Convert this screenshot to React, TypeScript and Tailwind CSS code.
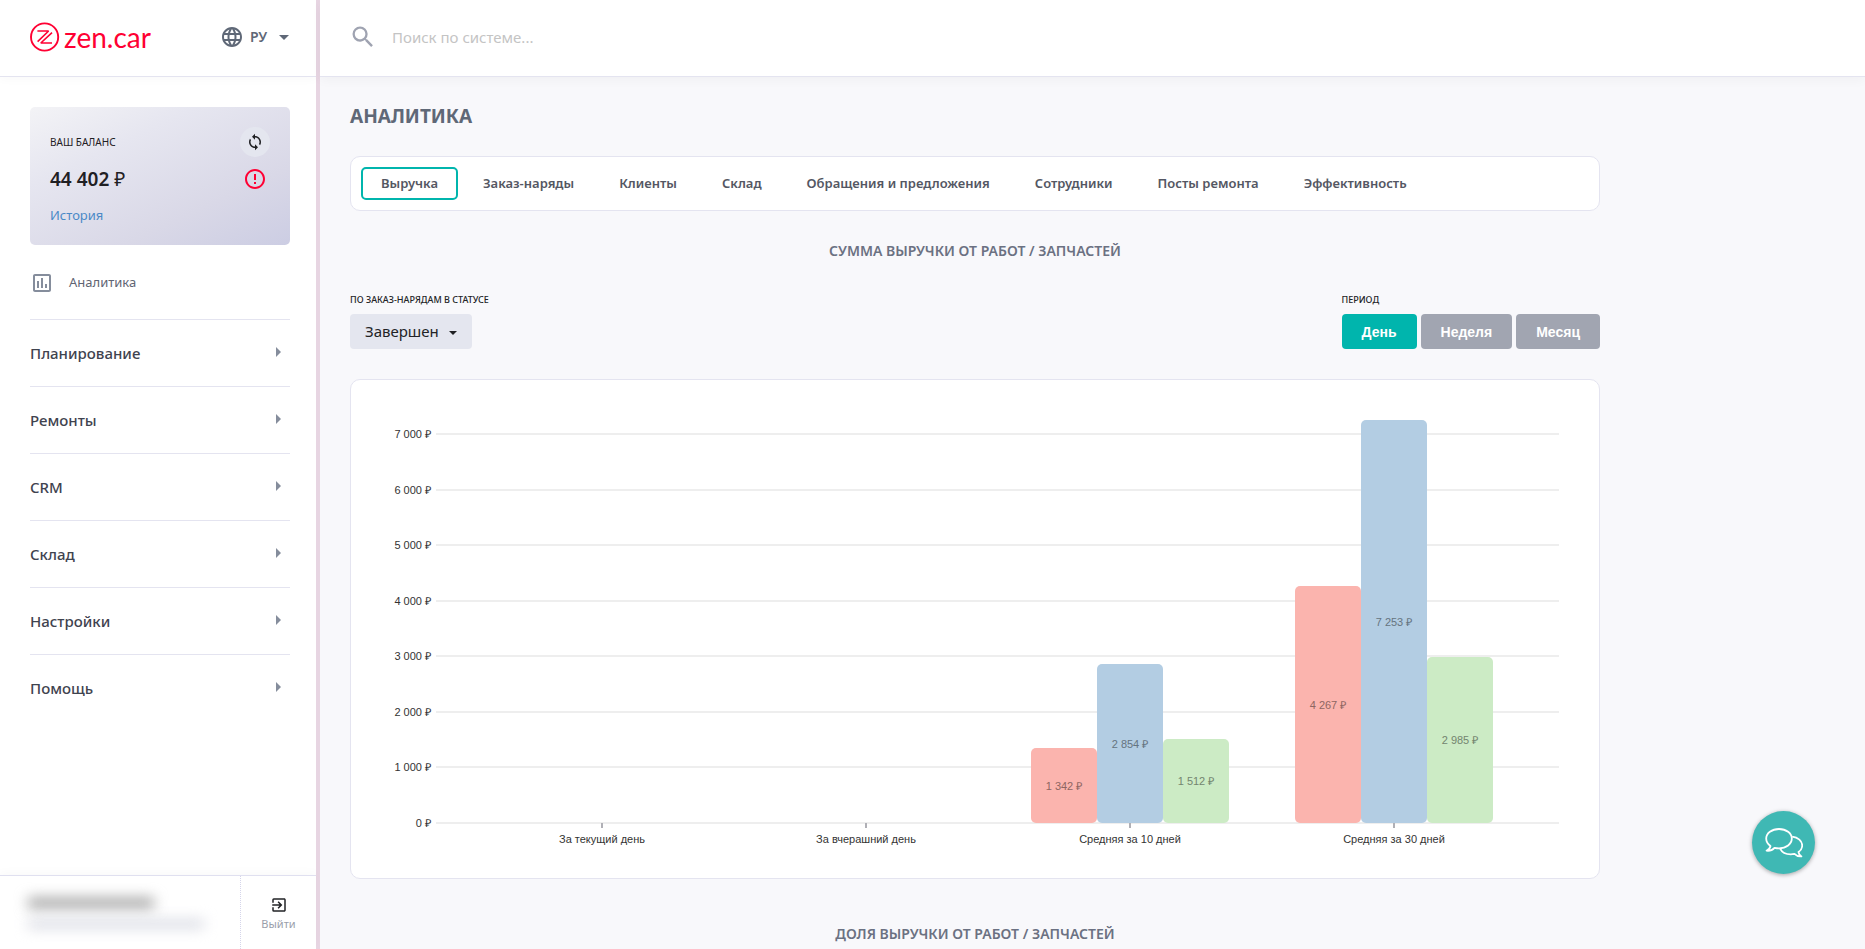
import { useState } from "react";
import {
  MdArrowDropDown,
  MdArrowRight,
  MdErrorOutline,
  MdExitToApp,
  MdLanguage,
  MdOutlineAssessment,
  MdSearch,
  MdSync,
} from "react-icons/md";

const sections = ["Планирование", "Ремонты", "CRM", "Склад", "Настройки", "Помощь"];

const tabs = [
  "Выручка",
  "Заказ-наряды",
  "Клиенты",
  "Склад",
  "Обращения и предложения",
  "Сотрудники",
  "Посты ремонта",
  "Эффективность",
];

const periods = ["День", "Неделя", "Месяц"];

const series = [
  { fill: "#fbb4ae", label: "#8e6662" },
  { fill: "#b3cde3", label: "#657480" },
  { fill: "#ccebc5", label: "#73856f" },
];

const groups = [
  { name: "За текущий день", values: [0, 0, 0] },
  { name: "За вчерашний день", values: [0, 0, 0] },
  { name: "Средняя за 10 дней", values: [1342, 2854, 1512] },
  { name: "Средняя за 30 дней", values: [4267, 7253, 2985] },
];

const rub = (n: number) => {
  const s = String(n);
  return (s.length > 3 ? `${s.slice(0, -3)} ${s.slice(-3)}` : s) + " ₽";
};

function Logo() {
  return (
    <a href="#" aria-label="zen.car" className="flex items-center gap-1 text-[#ff0033]">
      <svg width="30" height="30" viewBox="0 0 30 30" fill="none" stroke="currentColor">
        <circle cx="14.6" cy="15" r="13.6" strokeWidth="1.9" />
        <path
          d="M7.400 9H18.600L7.600 19.600M22 21H10.800L22 10.600"
          strokeWidth="1.6"
          strokeLinejoin="bevel"
        />
      </svg>
      <span className="font-[Lato,sans-serif] text-[28px] leading-[30px]">zen.car</span>
    </a>
  );
}

function Sidebar() {
  return (
    <aside className="flex h-screen w-80 shrink-0 flex-col border-r-4 border-[#e7d5e2] bg-white">
      <div className="flex h-[77px] shrink-0 items-center justify-between border-b border-[#e4e4f0] pr-5 pb-0.5 pl-[30px] shadow-[0_4px_8px_rgba(0,0,0,0.02)]">
        <Logo />
        <label className="flex items-center text-[#5f6877]">
          <MdLanguage size={24} aria-hidden />
          <span className="grid items-center">
            <select
              aria-label="Язык"
              className="col-start-1 row-start-1 w-[52px] appearance-none bg-transparent pl-1.5 text-sm leading-6 font-semibold outline-none"
            >
              <option>РУ</option>
            </select>
            <MdArrowDropDown
              size={24}
              aria-hidden
              className="pointer-events-none col-start-1 row-start-1 justify-self-end"
            />
          </span>
        </label>
      </div>

      <div className="flex grow flex-col pt-[30px] pr-[26px] pl-[30px]">
        <section className="flex h-[138px] justify-between rounded-[5px] bg-[linear-gradient(155deg,#f3f3f6_0%,#e6e6f0_30%,#d9d8e7_70%,#cccde3_100%)] px-5 py-5 text-[#1f2023]">
          <div className="flex flex-col items-start">
            <h2 className="text-[10px] leading-[30px]">ВАШ БАЛАНС</h2>
            <p className="mt-2 text-[19px] leading-7 font-semibold">
              44 402 <span className="font-normal">₽</span>
            </p>
            <a href="#" className="mt-3 text-[13px] leading-5 text-[#4a89c7]">
              История
            </a>
          </div>
          <div className="flex flex-col items-center gap-2.5">
            <button
              aria-label="Обновить"
              className="flex size-[30px] items-center justify-center rounded-full bg-[#e4e6ef]"
            >
              <MdSync size={18} />
            </button>
            <MdErrorOutline size={24} className="text-[#ff0033]" />
          </div>
        </section>

        <nav className="flex flex-col">
          <a
            href="#"
            className="flex h-[74px] items-center gap-[15px] pt-0.5 text-[13px] text-[#5f6573]"
          >
            <MdOutlineAssessment size={24} className="text-[#858d9c]" />
            Аналитика
          </a>
          {sections.map((name) => (
            <button
              key={name}
              className="flex h-[67px] items-center justify-between border-t border-[#e4e4f0] text-left text-[15px] font-medium text-[#3f434f]"
            >
              {name}
              <MdArrowRight size={24} className="mb-0.5 text-[#858d9c]" />
            </button>
          ))}
        </nav>
      </div>

      <footer className="flex h-[74px] shrink-0 border-t border-[#e0e0f0] shadow-[0_-4px_8px_rgba(0,0,0,0.02)]">
        <div className="flex grow flex-col gap-3 pt-[22px] pl-7">
          <div className="h-2.5 w-[126px] bg-[#9c9c9c] blur-[7px]" />
          <div className="h-2 w-[176px] bg-[#d3d5df] blur-[7px]" />
        </div>
        <button className="flex w-[76px] flex-col items-center justify-center border-l border-dotted border-[#d5d5ea] pt-1 text-[11px] leading-5 text-[#9a9eab]">
          <MdExitToApp size={18} className="text-[#222326]" />
          Выйти
        </button>
      </footer>
    </aside>
  );
}

function RevenueChart() {
  const base = 443;
  const left = 85;
  const right = 1208;
  const unit = 389 / 7000;
  const bar = 66;
  const inset = 67;
  return (
    <svg
      viewBox="0 0 1248 498"
      role="img"
      aria-label="Сумма выручки"
      className="block h-auto w-full font-['Liberation_Sans',Arial,sans-serif] text-[11px]"
    >
      {[0, 1, 2, 3, 4, 5, 6, 7].map((k) => {
        const y = Math.round(base - k * 1000 * unit);
        return (
          <g key={k}>
            <line x1={left} x2={right} y1={y} y2={y} stroke="#eeeeee" strokeWidth="2" />
            <text x={left - 5} y={y + 4} textAnchor="end" fill="#333333">
              {rub(k * 1000)}
            </text>
          </g>
        );
      })}
      {groups.map((group, g) => {
        const start = left + inset + g * bar * 4;
        const middle = start + bar * 1.5;
        return (
          <g key={group.name}>
            <line x1={middle} x2={middle} y1={base} y2={base + 5} stroke="#b0b0b6" strokeWidth="2" />
            <text x={middle} y={base + 20} textAnchor="middle" fill="#333333">
              {group.name}
            </text>
            {group.values.map((value, i) => {
              if (value === 0) return null;
              const height = Math.round(value * unit);
              return (
                <g key={i}>
                  <rect
                    x={start + i * bar}
                    y={base - height}
                    width={bar}
                    height={height}
                    rx="5"
                    fill={series[i].fill}
                  />
                  <text
                    x={start + (i + 0.5) * bar}
                    y={base - height / 2 + 4}
                    textAnchor="middle"
                    fill={series[i].label}
                  >
                    {rub(value)}
                  </text>
                </g>
              );
            })}
          </g>
        );
      })}
    </svg>
  );
}

function SectionTitle({ children }: { children: string }) {
  return (
    <h2 className="text-center text-sm leading-5 font-semibold text-[#6b7182]">{children}</h2>
  );
}

export default function App() {
  const [tab, setTab] = useState(tabs[0]);
  const [period, setPeriod] = useState(periods[0]);

  return (
    <div className="flex h-screen bg-[#f8f8fb] font-['Noto_Sans',sans-serif]">
      <Sidebar />
      <div className="flex min-w-0 grow flex-col">
        <header className="flex h-[77px] shrink-0 items-center gap-[15px] border-b border-[#e4e4f0] bg-white pr-[30px] pb-0.5 pl-[29px] shadow-[0_4px_10px_rgba(0,0,0,0.03)]">
          <MdSearch size={28} aria-hidden className="text-[#9fa3b1]" />
          <input
            type="search"
            aria-label="Поиск по системе"
            placeholder="Поиск по системе..."
            className="grow bg-transparent text-[15px] leading-6 outline-none placeholder:text-[#c4c4c4]"
          />
        </header>

        <main className="grow overflow-y-auto px-[30px]">
          <div className="flex max-w-[1250px] flex-col pt-[27px]">
            <h1 className="text-[19px] leading-6 font-bold text-[#5f6877]">АНАЛИТИКА</h1>

            <nav className="mt-7 flex gap-[5px] rounded-[10px] border border-[#e4e4f0] bg-white p-2.5">
              {tabs.map((name) => (
                <button
                  key={name}
                  onClick={() => setTab(name)}
                  className={
                    "h-[33px] rounded-[5px] border-2 px-[18px] text-[13px] font-semibold text-[#545763] " +
                    (name === tab ? "border-[#00b5ad]" : "border-transparent")
                  }
                >
                  {name}
                </button>
              ))}
            </nav>

            <div className="mt-[30px]">
              <SectionTitle>СУММА ВЫРУЧКИ ОТ РАБОТ / ЗАПЧАСТЕЙ</SectionTitle>
            </div>

            <div className="mt-8 flex items-end justify-between">
              <div className="flex flex-col items-start gap-[7px]">
                <label
                  htmlFor="status"
                  className="text-[9px] leading-[14px] font-medium text-[#222326]"
                >
                  ПО ЗАКАЗ-НАРЯДАМ В СТАТУСЕ
                </label>
                <span className="grid items-center">
                  <select
                    id="status"
                    className="col-start-1 row-start-1 h-[35px] w-[122px] appearance-none rounded-[4px] bg-[#e4e6ef] pl-[15px] text-[15px] text-[#222326] outline-none"
                  >
                    <option>Завершен</option>
                  </select>
                  <svg
                    width="8"
                    height="4"
                    viewBox="0 0 8 4"
                    aria-hidden
                    className="pointer-events-none col-start-1 row-start-1 mt-0.5 mr-[15px] justify-self-end"
                  >
                    <path d="M0 0h8L4 4z" fill="#1f2023" />
                  </svg>
                </span>
              </div>
              <div role="group" aria-labelledby="period" className="flex flex-col gap-[7px]">
                <span
                  id="period"
                  className="text-[9px] leading-[14px] font-medium text-[#222326]"
                >
                  ПЕРИОД
                </span>
                <div className="flex gap-1">
                  {periods.map((name) => (
                    <button
                      key={name}
                      onClick={() => setPeriod(name)}
                      className={
                        "h-[35px] rounded-[4px] px-5 font-['Liberation_Sans',Arial,sans-serif] text-sm font-bold text-white " +
                        (name === period ? "bg-[#00b5ad]" : "bg-[#a1a5b1]")
                      }
                    >
                      {name}
                    </button>
                  ))}
                </div>
              </div>
            </div>

            <div className="mt-[30px] rounded-[10px] border border-[#e4e4f0] bg-white">
              <RevenueChart />
            </div>

            <div className="mt-[45px]">
              <SectionTitle>ДОЛЯ ВЫРУЧКИ ОТ РАБОТ / ЗАПЧАСТЕЙ</SectionTitle>
            </div>
          </div>
        </main>
      </div>

      <button
        aria-label="Чат"
        className="fixed right-[50px] bottom-[75px] flex size-[63px] items-center justify-center rounded-full bg-[#3fb8b4] text-white shadow-[0_1px_4px_rgba(0,0,0,0.35)]"
      >
        <svg
          width="38"
          height="30"
          viewBox="0 0 38 30"
          fill="none"
          stroke="currentColor"
          strokeWidth="1.8"
          strokeLinejoin="round"
        >
          <path d="M14 1C6.800 1 1.200 5.200 1.200 10.600c0 3 1.700 5.600 4.300 7.400-.3 1.900-1.500 3.400-4 4.700 3.300.4 6-.6 8-2.900 1.400.3 3 .5 4.500.5 7.200 0 12.800-4.300 12.800-9.700S21.200 1 14 1z" />
          <path d="M27.200 8.600c5.800.6 10 4.300 10 8.900 0 2.700-1.400 5-3.700 6.600.2 1.800 1.100 3 2.900 4.300-2.900.2-5.200-.7-6.900-2.500-1.200.2-2.400.4-3.700.4-4.800 0-9-2.300-10.700-5.700" />
        </svg>
      </button>
    </div>
  );
}
